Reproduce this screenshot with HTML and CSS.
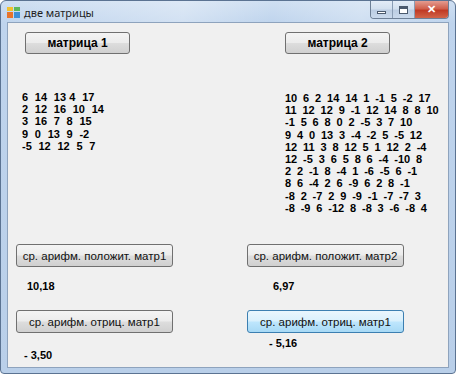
FILE: index.html
```html
<!DOCTYPE html>
<html lang="ru">

<head>
  <meta charset="UTF-8">
  <title>две матрицы</title>
  <link rel="stylesheet" href="styles.css">
</head>

<body>
  <div class="window">
    <div class="titlebar">
      <svg class="app-icon" width="14" height="12" viewBox="0 0 14 12">
        <rect x="0" y="5" width="6" height="6" fill="#e8742c" />
        <rect x="7" y="5" width="6" height="6" fill="#3e8fd6" />
        <rect x="0" y="0" width="6" height="4" fill="#f2c12e" />
        <rect x="7" y="0" width="6" height="4" fill="#5cb85c" />
      </svg>
      <span class="title">две матрицы</span>
      <div class="caption">
        <span class="cap-btn cap-min"><i></i></span>
        <span class="cap-btn cap-max"><i></i></span>
        <span class="cap-btn cap-close">✕</span>
      </div>
    </div>

    <div class="client">
      <div class="col col-left">
        <button class="btn btn-matrix">матрица 1</button>
        <div class="matrix">6  14  13 4  17
2  12  16  10  14
3  16  7  8  15
9  0  13  9  -2
-5  12  12  5  7</div>
        <button class="btn btn-wide">ср. арифм. положит. матр1</button>
        <div class="value value-pos">10,18</div>
        <button class="btn btn-wide">ср. арифм. отриц. матр1</button>
        <div class="value value-neg">- 3,50</div>
      </div>

      <div class="col col-right">
        <button class="btn btn-matrix">матрица 2</button>
        <div class="matrix">10 6 2 14 14 1 -1 5 -2 17
11 12 12 9 -1 12 14 8 8 10
-1 5 6 8 0 2 -5 3 7 10
9 4 0 13 3 -4 -2 5 -5 12
12 11 3 8 12 5 1 12 2 -4
12 -5 3 6 5 8 6 -4 -10 8
2 2 -1 8 -4 1 -6 -5 6 -1
8 6 -4 2 6 -9 6 2 8 -1
-8 2 -7 2 9 -9 -1 -7 -7 3
-8 -9 6 -12 8 -8 3 -6 -8 4</div>
        <button class="btn btn-wide">ср. арифм. положит. матр2</button>
        <div class="value value-pos">6,97</div>
        <button class="btn btn-wide btn-hot">ср. арифм. отриц. матр1</button>
        <div class="value value-neg">- 5,16</div>
      </div>
    </div>
  </div>
</body>

</html>
```

FILE: styles.css
```css
* {
  margin: 0;
  padding: 0;
  box-sizing: border-box;
}

body {
  background-color: #fff;
  font-family: "Liberation Sans", Arial, sans-serif;
}

.window {
  width: 456px;
  height: 374px;
  padding: 0 6px 5px 6px;
  border: 1px solid #5b7392;
  border-radius: 6px 6px 4px 4px;
  background: linear-gradient(180deg, #cfdff2 0px, #bfd4ed 22px, #b9cfe9 100%);
  display: flex;
  flex-direction: column;
}

/* заголовок окна */
.titlebar {
  height: 21px;
  display: flex;
  align-items: center;
  background: linear-gradient(100deg, rgba(255, 255, 255, 0) 0%, rgba(255, 255, 255, 0.3) 40%, rgba(255, 255, 255, 0) 60%, rgba(255, 255, 255, 0.25) 80%, rgba(255, 255, 255, 0) 100%);
}

.app-icon {
  margin-top: 2px;
}

.title {
  margin-left: 3px;
  margin-top: 2px;
  font-family: "Noto Sans", sans-serif;
  font-size: 11px;
  color: #1e1e1e;
}

.caption {
  margin-left: auto;
  align-self: flex-start;
  display: flex;
  height: 18px;
  border: 1px solid #6d7f96;
  border-top: none;
  border-radius: 0 0 4px 4px;
  overflow: hidden;
}

.cap-btn {
  height: 17px;
  display: flex;
  align-items: center;
  justify-content: center;
}

.cap-min,
.cap-max {
  width: 22px;
  background: linear-gradient(180deg, #e3ecf7 0%, #d3e0ef 45%, #bccde3 55%, #c9d9ec 100%);
  border-right: 1px solid #8a9db5;
}

.cap-min i {
  display: block;
  width: 9px;
  height: 3px;
  margin-top: 5px;
  background: #fff;
  border: 1px solid #4b5a6e;
}

.cap-max i {
  display: block;
  width: 9px;
  height: 8px;
  background: #fff;
  border: 1px solid #4b5a6e;
  box-shadow: inset 0 2px 0 #4b5a6e;
}

.cap-close {
  width: 33px;
  color: #fff;
  font-size: 11px;
  font-weight: bold;
  background: linear-gradient(180deg, #e49c90 0%, #d0604c 45%, #c03a24 55%, #d26448 100%);
}

/* клиентская область */
.client {
  flex: 1;
  display: flex;
  background-color: #f0f0f0;
  border: 1px solid #8ea3bd;
}

.col {
  display: flex;
  flex-direction: column;
  align-items: flex-start;
  padding-top: 9px;
}

.col-left {
  width: 220px;
}

.col-right {
  flex: 1;
}

.btn {
  height: 23px;
  border: 1px solid #707070;
  border-radius: 3px;
  background: linear-gradient(180deg, #f4f4f4 0%, #ececec 48%, #dddddd 52%, #d0d0d0 100%);
  font-family: "Liberation Sans", Arial, sans-serif;
  font-size: 11.5px;
  color: #111;
  cursor: pointer;
}

.btn-matrix {
  width: 105px;
  height: 22px;
  font-size: 12px;
  font-weight: bold;
  color: #000;
}

.btn-wide {
  width: 157px;
}

.btn-hot {
  border-color: #3c7fb1;
  background: linear-gradient(180deg, #eaf6fd 0%, #d9f0fc 48%, #bee6fd 52%, #a7d9f5 100%);
}

.matrix {
  height: 153px;
  margin-top: 37px;
  white-space: pre;
  font-size: 11px;
  font-weight: bold;
  line-height: 12.2px;
  word-spacing: 2.8px;
  color: #000;
}

.col-left .btn-matrix {
  margin-left: 17px;
}

.col-left .matrix {
  margin-left: 14px;
  word-spacing: 0.3px;
}

.col-left .btn-wide {
  margin-left: 8px;
}

.col-right .btn-matrix {
  margin-left: 57px;
}

.col-right .matrix {
  margin-left: 57px;
  margin-top: 38px;
  height: 152px;
}

.col-right .btn-wide {
  margin-left: 19px;
}

.value {
  font-size: 11px;
  font-weight: bold;
  line-height: 13px;
  color: #000;
}

.value-pos {
  margin-top: 13px;
  margin-bottom: 17px;
}

.col-left .value-pos {
  margin-left: 19px;
}

.col-right .value-pos {
  margin-left: 45px;
}

.col-left .value-neg {
  margin-left: 16px;
  margin-top: 16px;
}

.col-right .value-neg {
  margin-left: 41px;
  margin-top: 4px;
}
```
